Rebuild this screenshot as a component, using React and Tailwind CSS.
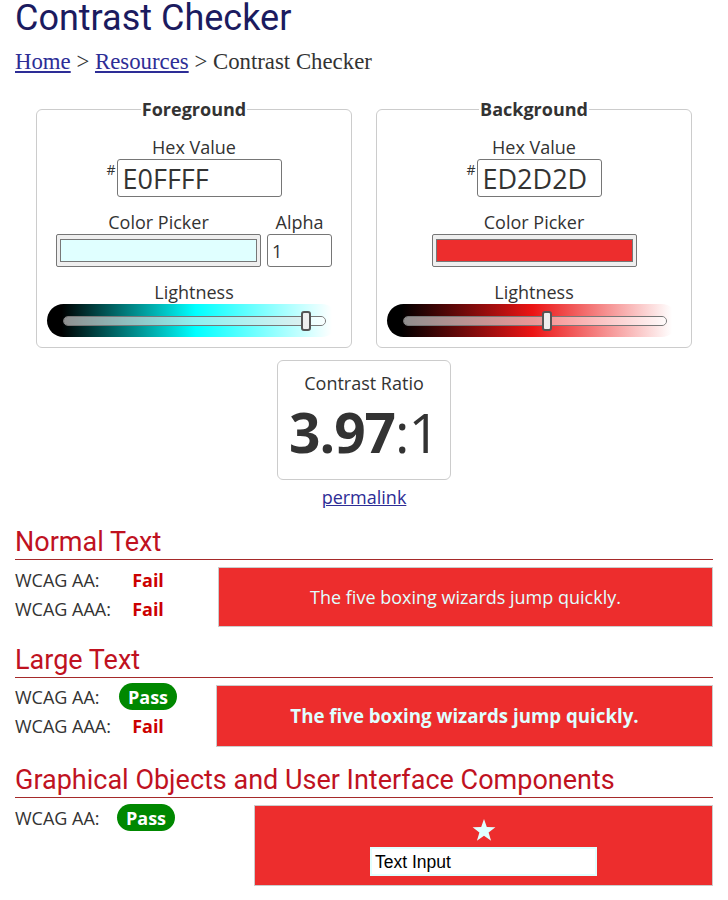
function Slider({ gradient, thumbLeft, trackWidth }) {
  return (
    <div className={`relative ml-[10px] h-[33px] w-[291px] self-start rounded-full ${gradient}`}>
      <div
        className="absolute left-[16px] top-[12px] flex h-[10px] overflow-hidden rounded-full border border-[#777]"
        style={{ width: trackWidth }}
      >
        <div className="h-full bg-[rgba(230,230,230,0.62)]" style={{ width: thumbLeft - 12 }} />
        <div className="h-full flex-1 bg-[rgba(255,255,255,0.5)]" />
      </div>
      <div
        className="absolute top-[7px] h-[20px] w-[10px] rounded-[3px] border-2 border-[#555] bg-[#eee]"
        style={{ left: thumbLeft }}
      />
    </div>
  );
}

function Fieldset({ title, children }) {
  return (
    <fieldset className="w-[316px] rounded-[6px] border border-[#ccc] pb-[10px]">
      <legend className="mx-auto px-[1px] text-[18px] font-bold leading-[24px] text-[#333]">{title}</legend>
      <div className="flex flex-col items-center pt-[14px]">{children}</div>
    </fieldset>
  );
}

function HexInput({ value, width }) {
  return (
    <div className="flex items-start">
      <span className="mr-[1px] mt-[4px] text-[14px] leading-none">#</span>
      <input
        readOnly
        value={value}
        className={`${width} h-[38px] rounded-[3px] border border-[#767676] bg-white px-[5px] font-['Open_Sans'] text-[27px] leading-[36px] text-[#333] outline-none`}
      />
    </div>
  );
}

function Picker({ color }) {
  return (
    <div className="h-[33px] w-[205px] rounded-[2px] border border-[#767676] bg-[#efefef] px-[3px] py-[4px]">
      <div className={`h-full w-full border border-[#777] ${color}`} />
    </div>
  );
}

function Fail() {
  return <span className="font-bold text-[#cc0000]">Fail</span>;
}

function Pass() {
  return (
    <span className="inline-flex h-[27px] w-[58px] items-center justify-center rounded-full bg-[#008800] font-bold text-white">
      Pass
    </span>
  );
}

function Row({ label, result, labelW = "w-[103px]" }) {
  return (
    <div className="flex h-[29px] items-center">
      <span className={labelW}>{label}</span>
      <span className="w-[60px] text-center">{result}</span>
    </div>
  );
}

function Heading({ children }) {
  return (
    <h2 className="border-b border-[#a52a2a] pb-[2px] font-['Roboto'] text-[27px] leading-[29px] text-[#c0121f]">
      {children}
    </h2>
  );
}

export default function App() {
  return (
    <div className="min-h-[900px] w-[728px] bg-white px-[15px] font-['Open_Sans'] text-[18px] leading-[24px] text-[#333]">
      <h1 className="font-['Roboto'] text-[36px] leading-[37px] text-[#1b1b5f]">Contrast Checker</h1>
      <nav className="mt-[11px] font-['Liberation_Serif'] text-[22.8px] leading-[28px] text-[#333]">
        <a className="text-[#2d2d96] underline">Home</a> &gt;{" "}
        <a className="text-[#2d2d96] underline">Resources</a> &gt; Contrast Checker
      </nav>

      <div className="mt-[21px] flex justify-center gap-6">
        <Fieldset title="Foreground">
          <div>Hex Value</div>
          <HexInput value="E0FFFF" width="w-[165px]" />
          <div className="mt-[13px] flex items-end gap-[6px]">
            <div className="flex flex-col items-center">
              <div>Color Picker</div>
              <Picker color="bg-[#E0FFFF]" />
            </div>
            <div className="flex flex-col items-center">
              <div>Alpha</div>
              <input
                readOnly
                value="1"
                className="h-[33px] w-[65px] rounded-[3px] border border-[#767676] bg-white px-[4px] font-['Open_Sans'] text-[18px] text-[#333] outline-none"
              />
            </div>
          </div>
          <div className="mt-[13px]">Lightness</div>
          <Slider
            gradient="bg-[linear-gradient(to_right,#000_5%,#0ff_51%,#fff_98%)]"
            thumbLeft={254}
            trackWidth={263}
          />
        </Fieldset>

        <Fieldset title="Background">
          <div>Hex Value</div>
          <HexInput value="ED2D2D" width="w-[125px]" />
          <div className="mt-[13px] flex flex-col items-center">
            <div>Color Picker</div>
            <Picker color="bg-[#ED2D2D]" />
          </div>
          <div className="mt-[13px]">Lightness</div>
          <Slider
            gradient="bg-[linear-gradient(to_right,#000_5%,#eb1414_50%,#fff_98%)]"
            thumbLeft={155}
            trackWidth={264}
          />
        </Fieldset>
      </div>

      <div className="mx-auto mt-[12px] flex h-[120px] w-[174px] flex-col items-center rounded-[6px] border border-[#ccc] pt-[10px]">
        <div>Contrast Ratio</div>
        <div className="mt-[7px] text-[55px] leading-[60px] tracking-[-1px] text-[#333]">
          <span className="font-bold">3.97</span>:1
        </div>
      </div>
      <div className="mt-[5px] text-center">
        <a className="text-[#2d2d96] underline">permalink</a>
      </div>

      <section className="mt-[19px]">
        <Heading>Normal Text</Heading>
        <div className="mt-[5px] flex items-start">
          <div className="flex w-[203px] flex-col">
            <Row label="WCAG AA:" result={<Fail />} />
            <Row label="WCAG AAA:" result={<Fail />} />
          </div>
          <div className="mt-[2px] flex h-[60px] flex-1 items-center justify-center border border-[#ccc] bg-[#ED2D2D] text-[18px] text-[#E0FFFF]">
            The five boxing wizards jump quickly.
          </div>
        </div>
      </section>

      <section className="mt-[19px]">
        <Heading>Large Text</Heading>
        <div className="mt-[4px] flex items-start">
          <div className="flex w-[201px] flex-col">
            <Row label="WCAG AA:" result={<Pass />} />
            <Row label="WCAG AAA:" result={<Fail />} />
          </div>
          <div className="mt-[3px] flex h-[62px] flex-1 items-center justify-center border border-[#ccc] bg-[#ED2D2D] text-[18.7px] font-bold text-[#E0FFFF]">
            The five boxing wizards jump quickly.
          </div>
        </div>
      </section>

      <section className="mt-[19px]">
        <Heading>Graphical Objects and User Interface Components</Heading>
        <div className="mt-[5px] flex items-start">
          <div className="flex w-[239px] flex-col">
            <Row label="WCAG AA:" result={<Pass />} labelW="w-[101px]" />
          </div>
          <div className="mt-[2px] flex h-[81px] flex-1 flex-col items-center border border-[#ccc] bg-[#ED2D2D] pt-[13px]">
            <svg width="24" height="22" viewBox="0 0 24 22" className="block">
              <polygon
                points="12,0 14.8,8.1 23.4,8.3 16.6,13.5 19.1,21.7 12,16.8 4.9,21.7 7.4,13.5 0.6,8.3 9.2,8.1"
                fill="#E0FFFF"
              />
            </svg>
            <div className="mt-[6px] flex h-[29px] w-[227px] items-center border-2 border-[#E0FFFF] bg-white px-[3px] font-['Liberation_Sans'] text-[17.5px] text-black">
              Text Input
            </div>
          </div>
        </div>
      </section>
    </div>
  );
}
